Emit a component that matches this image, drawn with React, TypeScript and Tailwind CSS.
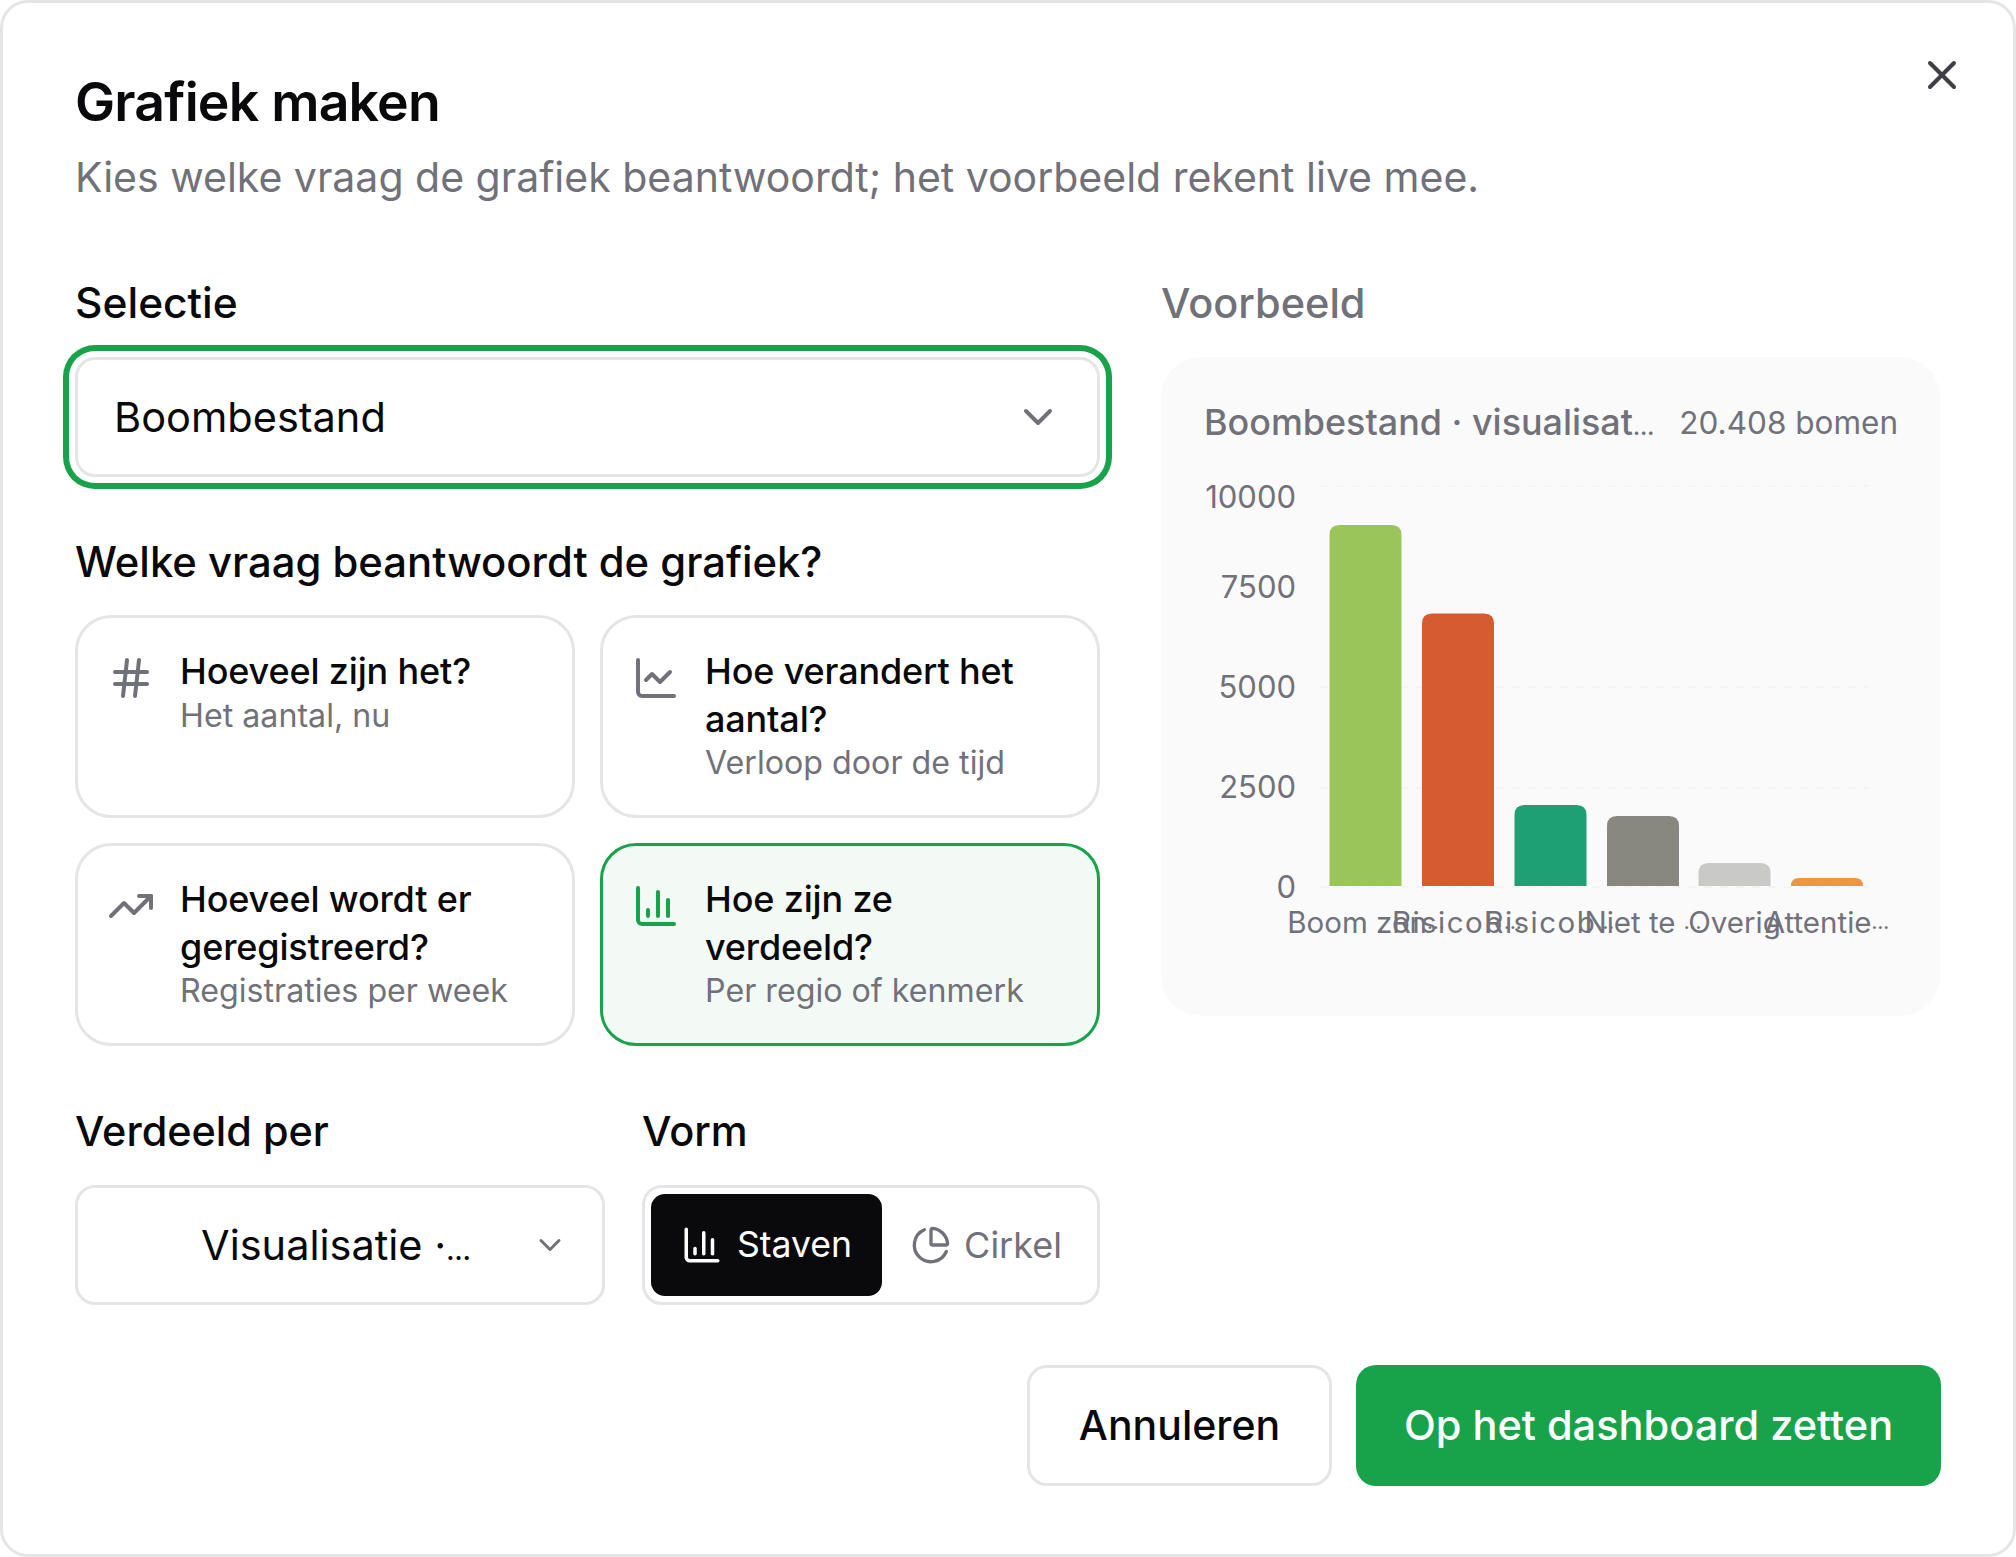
import { Hash, ChartLine, TrendingUp, ChartColumn, ChartPie, ChevronDown, X } from "lucide-react";

const bars = [
  { x: 1329.5, top: 525, color: "#99c55b" },
  { x: 1422, top: 613.5, color: "#d75b30" },
  { x: 1514.5, top: 805, color: "#1fa074" },
  { x: 1607, top: 816, color: "#888880" },
  { x: 1698.5, top: 863, color: "#c9c9c7" },
  { x: 1791, top: 878, color: "#ec963f" },
];
const base = 886;
const w = 72;

function barPath(x: number, top: number) {
  const r = Math.min(10, base - top);
  return `M${x} ${base}V${top + r}Q${x} ${top} ${x + r} ${top}H${x + w - r}Q${x + w} ${top} ${x + w} ${top + r}V${base}Z`;
}

const ticks = [
  { label: "10000", y: 496 },
  { label: "7500", y: 586 },
  { label: "5000", y: 686 },
  { label: "2500", y: 786 },
  { label: "0", y: 886 },
];
const xlabels = [
  { label: "Boom zon", more: true, x: 1366, spacing: 0 },
  { label: "Risicob", more: true, x: 1457.5, spacing: 1.5 },
  { label: "Risicob", more: true, x: 1550, spacing: 1.5 },
  { label: "Niet te ", more: true, x: 1643, spacing: 0 },
  { label: "Overig", more: false, x: 1734.5, spacing: 0 },
  { label: "Attentie", more: true, x: 1827, spacing: 0 },
];

function Dots() {
  return <span className="text-[0.62em] font-semibold">…</span>;
}

function Card({
  icon,
  title,
  sub,
  active,
}: {
  icon: React.ReactNode;
  title: string;
  sub: string;
  active?: boolean;
}) {
  return (
    <div
      className={
        active
          ? "flex gap-[25px] h-[203px] rounded-[36px] border-[3px] border-[#18a34b] bg-[#f3faf6] px-[29px] py-[30px]"
          : "flex gap-[25px] h-[203px] rounded-[36px] border-[3px] border-[#e5e5e5] bg-white px-[29px] py-[30px]"
      }
    >
      <div className={active ? "shrink-0 mt-[6px] text-[#18a34b]" : "shrink-0 mt-[6px] text-[#71717a]"}>{icon}</div>
      <div className="min-w-0">
        <div className="text-[36px] leading-[47.5px] font-medium text-[#09090b] tracking-[-0.15px]">{title}</div>
        <div className="text-[32.2px] leading-[40px] text-[#71717a]">{sub}</div>
      </div>
    </div>
  );
}

export default function App() {
  return (
    <div className="relative w-[2016px] h-[1557px] bg-white rounded-[28px] border-[3px] border-[#e5e5e5] pl-[72px] pt-[68px] text-[#09090b] [font-family:Inter,'Liberation_Sans',sans-serif] overflow-hidden">
      <button className="absolute right-[47px] top-[48px] text-[#3f3f46]">
        <X size={48} strokeWidth={2} />
      </button>

      <h1 className="text-[53.6px] leading-[62px] font-semibold tracking-[-0.8px]">Grafiek maken</h1>
      <p className="text-[41px] leading-[46px] mt-[21px] text-[#71717a]">
        Kies welke vraag de grafiek beantwoordt; het voorbeeld rekent live mee.
      </p>

      <div className="flex gap-[61px] mt-[80px]">
        <div className="w-[1025px] shrink-0">
          <div className="text-[42.5px] leading-[46px] font-medium">Selectie</div>
          <div className="mt-[31px] h-[120px] rounded-[20px] border-[3px] border-[#e5e5e5] bg-white flex items-center justify-between pl-[36px] pr-[35px] shadow-[0_0_0_6px_#ffffff,0_0_0_12px_#18a34b]">
            <span className="text-[41.5px]">Boombestand</span>
            <ChevronDown size={48} strokeWidth={2} className="text-[#71717a]" />
          </div>

          <div className="mt-[62px] text-[41.8px] leading-[46px] font-medium">Welke vraag beantwoordt de grafiek?</div>
          <div className="mt-[30px] grid grid-cols-2 gap-x-[25px] gap-y-[25px]">
            <Card icon={<Hash size={48} />} title="Hoeveel zijn het?" sub="Het aantal, nu" />
            <Card icon={<ChartLine size={48} />} title="Hoe verandert het aantal?" sub="Verloop door de tijd" />
            <Card icon={<TrendingUp size={48} />} title="Hoeveel wordt er geregistreerd?" sub="Registraties per week" />
            <Card icon={<ChartColumn size={48} />} title="Hoe zijn ze verdeeld?" sub="Per regio of kenmerk" active />
          </div>

          <div className="mt-[62px] flex gap-[37px]">
            <div className="w-[530px]">
              <div className="text-[41.4px] leading-[46px] font-medium">Verdeeld per</div>
              <div className="mt-[31px] h-[120px] rounded-[20px] border-[3px] border-[#e5e5e5] flex items-center justify-between pl-[123px] pr-[34px]">
                <span className="text-[41.5px]">
                  Visualisatie ·<Dots />
                </span>
                <ChevronDown size={36} strokeWidth={2} className="text-[#71717a]" />
              </div>
            </div>
            <div className="w-[458px]">
              <div className="text-[41.5px] leading-[46px] font-medium">Vorm</div>
              <div className="mt-[31px] h-[120px] rounded-[20px] border-[3px] border-[#e5e5e5] p-[6px] flex items-center">
                <div className="h-full w-[231px] rounded-[14px] bg-[#0a0a0c] text-white flex items-center justify-center gap-[14px] text-[35.6px]">
                  <ChartColumn size={42} strokeWidth={2} />
                  <span>Staven</span>
                </div>
                <div className="flex-1 flex items-center justify-center gap-[13px] text-[36px] text-[#71717a]">
                  <ChartPie size={40} strokeWidth={2} />
                  <span>Cirkel</span>
                </div>
              </div>
            </div>
          </div>
        </div>

        <div className="w-[779px] shrink-0">
          <div className="text-[41.5px] leading-[46px] font-medium text-[#71717a]">Voorbeeld</div>
          <div className="mt-[31px] h-[659px] rounded-[40px] bg-[#fafafa] pt-[43px]">
            <div className="flex items-center justify-between h-[46px] pl-[43px] pr-[42px] whitespace-nowrap text-[#71717a]">
              <span className="text-[35.9px] font-medium">
                Boombestand · visualisat
                <Dots />
              </span>
              <span className="text-[31.5px]">20.408 bomen</span>
            </div>
            <svg viewBox="1161 446 779 510" className="block w-[779px] h-[510px]">
              {[486, 687, 788, 887].map((y) => (
                <line key={y} x1="1320" x2="1869" y1={y} y2={y} stroke="#f1f6f2" strokeWidth="2" strokeDasharray="8 8" />
              ))}
              {bars.map((b) => (
                <path key={b.x} d={barPath(b.x, b.top)} fill={b.color} />
              ))}
              {ticks.map((t) => (
                <text key={t.label} x="1296" y={t.y} textAnchor="end" dominantBaseline="central" fontSize="31" fill="#71717a">
                  {t.label}
                </text>
              ))}
              {xlabels.map((l, i) => (
                <text key={i} x={l.x} y="922" textAnchor="middle" dominantBaseline="central" fontSize="29.5" fill="#71717a" letterSpacing={l.spacing} xmlSpace="preserve">
                  {l.label}
                  {l.more ? <tspan fontSize="18.5" fontWeight="600">…</tspan> : null}
                </text>
              ))}
            </svg>
          </div>
        </div>
      </div>

      <div className="mt-[60px] flex justify-end gap-[24px] w-[1866px]">
        <button className="w-[305px] h-[121px] rounded-[20px] border-[3px] border-[#e5e5e5] bg-white text-[41px] font-medium text-[#09090b]">
          Annuleren
        </button>
        <button className="w-[585px] h-[121px] rounded-[20px] bg-[#18a34b] text-[41.5px] font-medium text-white">
          Op het dashboard zetten
        </button>
      </div>
    </div>
  );
}
